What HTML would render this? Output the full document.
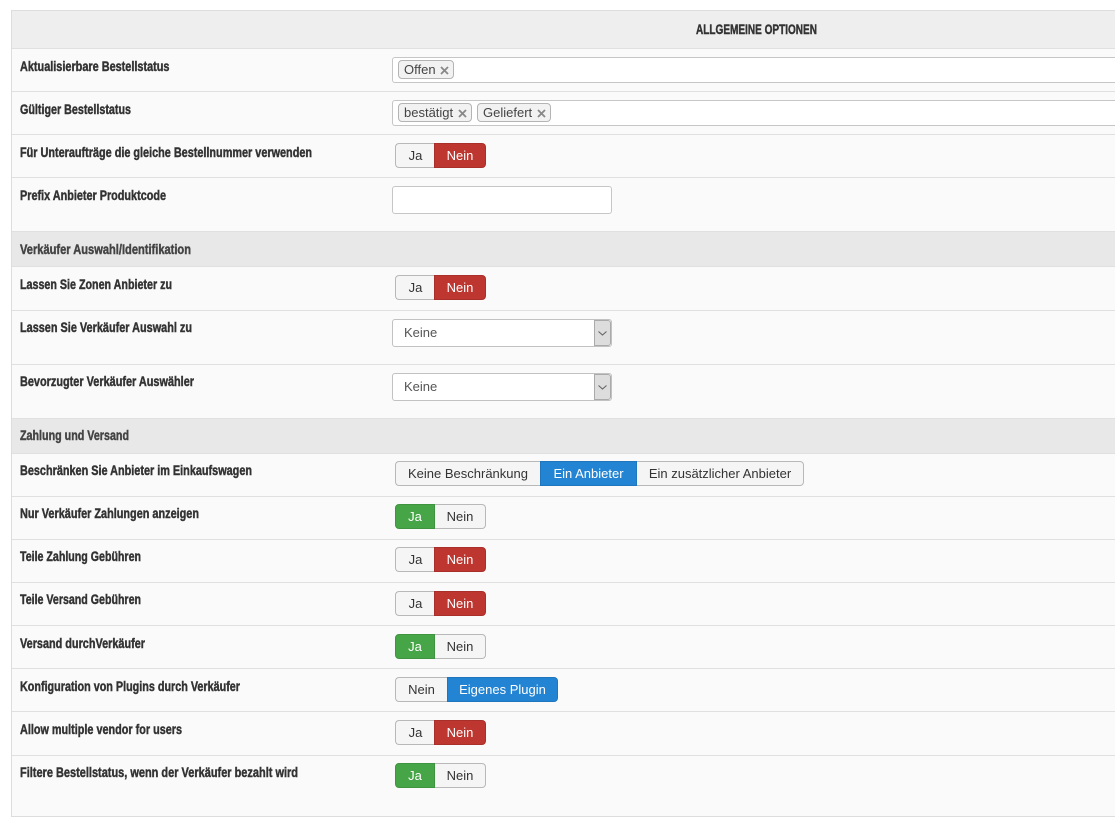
<!DOCTYPE html>
<html lang="de"><head><meta charset="utf-8"><title>Optionen</title>
<style>
html,body{margin:0;padding:0;background:#fff;width:1115px;height:817px;overflow:hidden}
*{box-sizing:border-box}
body{font-family:"Liberation Sans",Arial,sans-serif;font-size:13px;color:#333;position:relative}
.panel{position:absolute;left:11px;top:10px;width:1104px;height:807px;background:#fafafa;border-left:1px solid #ddd;border-top:1px solid #ddd;border-bottom:1px solid #ddd}
.band{position:absolute;left:12px;width:1103px}
.ln{position:absolute;left:12px;width:1103px;height:1px;background:#e0e0e0}
.tags{position:absolute;left:392px;width:723px;height:26px;background:#fff;border:1px solid #c6c6c6;border-right:0;border-radius:3px 0 0 3px}
.tag{position:absolute;top:2px;height:19px;background:#f2f2f2;border:1px solid #b4b4b4;border-radius:4px;font-size:13px;line-height:17px;padding-left:5px;color:#444;white-space:nowrap}
.tag svg{position:absolute;top:5px;right:4px}
.inp{position:absolute;left:392px;width:220px;height:28px;background:#fff;border:1px solid #c6c6c6;border-radius:3px}
.sel{position:absolute;left:392px;width:220px;height:28px;background:#fff;border:1px solid #c2c2c2;border-radius:3px;font-size:13px;line-height:25px;padding-left:11px;color:#555}
.sel i{position:absolute;right:0;top:0;width:17px;height:26px;background:#ddd;border:1px solid #aaa;border-radius:0 3px 3px 0}
.sel svg{position:absolute;left:2px;top:9px}
.bg{position:absolute;left:395px;height:25px;display:flex;font-size:13px;line-height:23px;text-align:center}
.bg b{font-weight:400;display:block;height:25px;background:#f5f5f5;border:1px solid #b8b8b8;color:#333;white-space:nowrap}
.bg b:first-child{border-radius:4px 0 0 4px;border-right:0}
.bg b:last-child{border-radius:0 4px 4px 0;border-left:0}
.bg b.r{background:#bd362f;border:1px solid #a9302a;color:#fff}
.bg b.g{background:#46a546;border:1px solid #3f943f;color:#fff}
.bg b.u{background:#2384d3;border:1px solid #1f76bd;color:#fff}
svg.labels{position:absolute;left:0;top:0}
svg.labels text{font-family:"Liberation Sans",Arial,sans-serif;font-weight:700;font-size:13.5px;fill:#333;stroke:#333;stroke-width:.45}
</style></head><body>
<div class="panel"></div>
<div class="band" style="top:11px;height:37px;background:#eee"></div>
<div class="band" style="top:232px;height:34px;background:#e8e8e8"></div>
<div class="band" style="top:419px;height:34px;background:#e8e8e8"></div>
<div class="ln" style="top:48px"></div><div class="ln" style="top:91px"></div><div class="ln" style="top:134px"></div><div class="ln" style="top:177px"></div><div class="ln" style="top:231px"></div><div class="ln" style="top:266px"></div><div class="ln" style="top:310px"></div><div class="ln" style="top:364px"></div><div class="ln" style="top:418px"></div><div class="ln" style="top:453px"></div><div class="ln" style="top:496px"></div><div class="ln" style="top:539px"></div><div class="ln" style="top:582px"></div><div class="ln" style="top:625px"></div><div class="ln" style="top:668px"></div><div class="ln" style="top:711px"></div><div class="ln" style="top:755px"></div>

<svg class="labels" width="1115" height="817">
<text x="696" y="34" textLength="121" lengthAdjust="spacingAndGlyphs">ALLGEMEINE OPTIONEN</text>
<text x="20" y="71" textLength="149.5" lengthAdjust="spacingAndGlyphs">Aktualisierbare Bestellstatus</text>
<text x="20" y="114" textLength="111" lengthAdjust="spacingAndGlyphs">Gültiger Bestellstatus</text>
<text x="20" y="157" textLength="292" lengthAdjust="spacingAndGlyphs">Für Unteraufträge die gleiche Bestellnummer verwenden</text>
<text x="20" y="200" textLength="146" lengthAdjust="spacingAndGlyphs">Prefix Anbieter Produktcode</text>
<text x="20" y="254" textLength="171" lengthAdjust="spacingAndGlyphs" style="fill:#444;stroke:#444">Verkäufer Auswahl/Identifikation</text>
<text x="20" y="289" textLength="152" lengthAdjust="spacingAndGlyphs">Lassen Sie Zonen Anbieter zu</text>
<text x="20" y="332" textLength="172" lengthAdjust="spacingAndGlyphs">Lassen Sie Verkäufer Auswahl zu</text>
<text x="20" y="386" textLength="174" lengthAdjust="spacingAndGlyphs">Bevorzugter Verkäufer Auswähler</text>
<text x="20" y="440" textLength="109" lengthAdjust="spacingAndGlyphs" style="fill:#444;stroke:#444">Zahlung und Versand</text>
<text x="20" y="475" textLength="232" lengthAdjust="spacingAndGlyphs">Beschränken Sie Anbieter im Einkaufswagen</text>
<text x="20" y="518" textLength="179" lengthAdjust="spacingAndGlyphs">Nur Verkäufer Zahlungen anzeigen</text>
<text x="20" y="561" textLength="121" lengthAdjust="spacingAndGlyphs">Teile Zahlung Gebühren</text>
<text x="20" y="604" textLength="121" lengthAdjust="spacingAndGlyphs">Teile Versand Gebühren</text>
<text x="20" y="648" textLength="125" lengthAdjust="spacingAndGlyphs">Versand durchVerkäufer</text>
<text x="20" y="691" textLength="220" lengthAdjust="spacingAndGlyphs">Konfiguration von Plugins durch Verkäufer</text>
<text x="20" y="734" textLength="162" lengthAdjust="spacingAndGlyphs">Allow multiple vendor for users</text>
<text x="20" y="777" textLength="278" lengthAdjust="spacingAndGlyphs">Filtere Bestellstatus, wenn der Verkäufer bezahlt wird</text>
</svg>

<div class="tags" style="top:57px">
<span class="tag" style="left:5px;width:56px">Offen<svg width="9" height="9" viewBox="0 0 9 9"><path d="M1 1L8 8M8 1L1 8" stroke="#888" stroke-width="1.800"/></svg></span>
</div>
<div class="tags" style="top:100px">
<span class="tag" style="left:5px;width:74px">bestätigt<svg width="9" height="9" viewBox="0 0 9 9"><path d="M1 1L8 8M8 1L1 8" stroke="#888" stroke-width="1.800"/></svg></span>
<span class="tag" style="left:84px;width:74px">Geliefert<svg width="9" height="9" viewBox="0 0 9 9"><path d="M1 1L8 8M8 1L1 8" stroke="#888" stroke-width="1.800"/></svg></span>
</div>
<div class="inp" style="top:186px"></div>
<div class="sel" style="top:319px">Keine<i><svg width="11" height="7" viewBox="0 0 11 7"><path d="M1.500 1.500L5.500 5L9.500 1.500" stroke="#666" stroke-width="1.100" fill="none"/></svg></i></div>
<div class="sel" style="top:373px">Keine<i><svg width="11" height="7" viewBox="0 0 11 7"><path d="M1.500 1.500L5.500 5L9.500 1.500" stroke="#666" stroke-width="1.100" fill="none"/></svg></i></div>

<div class="bg" style="top:143px"><b style="width:39px;padding-left:1px">Ja</b><b class="r" style="width:52px">Nein</b></div>
<div class="bg" style="top:275px"><b style="width:39px;padding-left:1px">Ja</b><b class="r" style="width:52px">Nein</b></div>
<div class="bg" style="top:461px"><b style="width:145px">Keine Beschränkung</b><b class="u" style="width:97px">Ein Anbieter</b><b style="width:167px">Ein zusätzlicher Anbieter</b></div>
<div class="bg" style="top:504px"><b class="g" style="width:40px">Ja</b><b style="width:51px">Nein</b></div>
<div class="bg" style="top:547px"><b style="width:39px;padding-left:1px">Ja</b><b class="r" style="width:52px">Nein</b></div>
<div class="bg" style="top:591px"><b style="width:39px;padding-left:1px">Ja</b><b class="r" style="width:52px">Nein</b></div>
<div class="bg" style="top:634px"><b class="g" style="width:40px">Ja</b><b style="width:51px">Nein</b></div>
<div class="bg" style="top:677px"><b style="width:52px">Nein</b><b class="u" style="width:111px">Eigenes Plugin</b></div>
<div class="bg" style="top:720px"><b style="width:39px;padding-left:1px">Ja</b><b class="r" style="width:52px">Nein</b></div>
<div class="bg" style="top:763px"><b class="g" style="width:40px">Ja</b><b style="width:51px">Nein</b></div>
</body></html>
